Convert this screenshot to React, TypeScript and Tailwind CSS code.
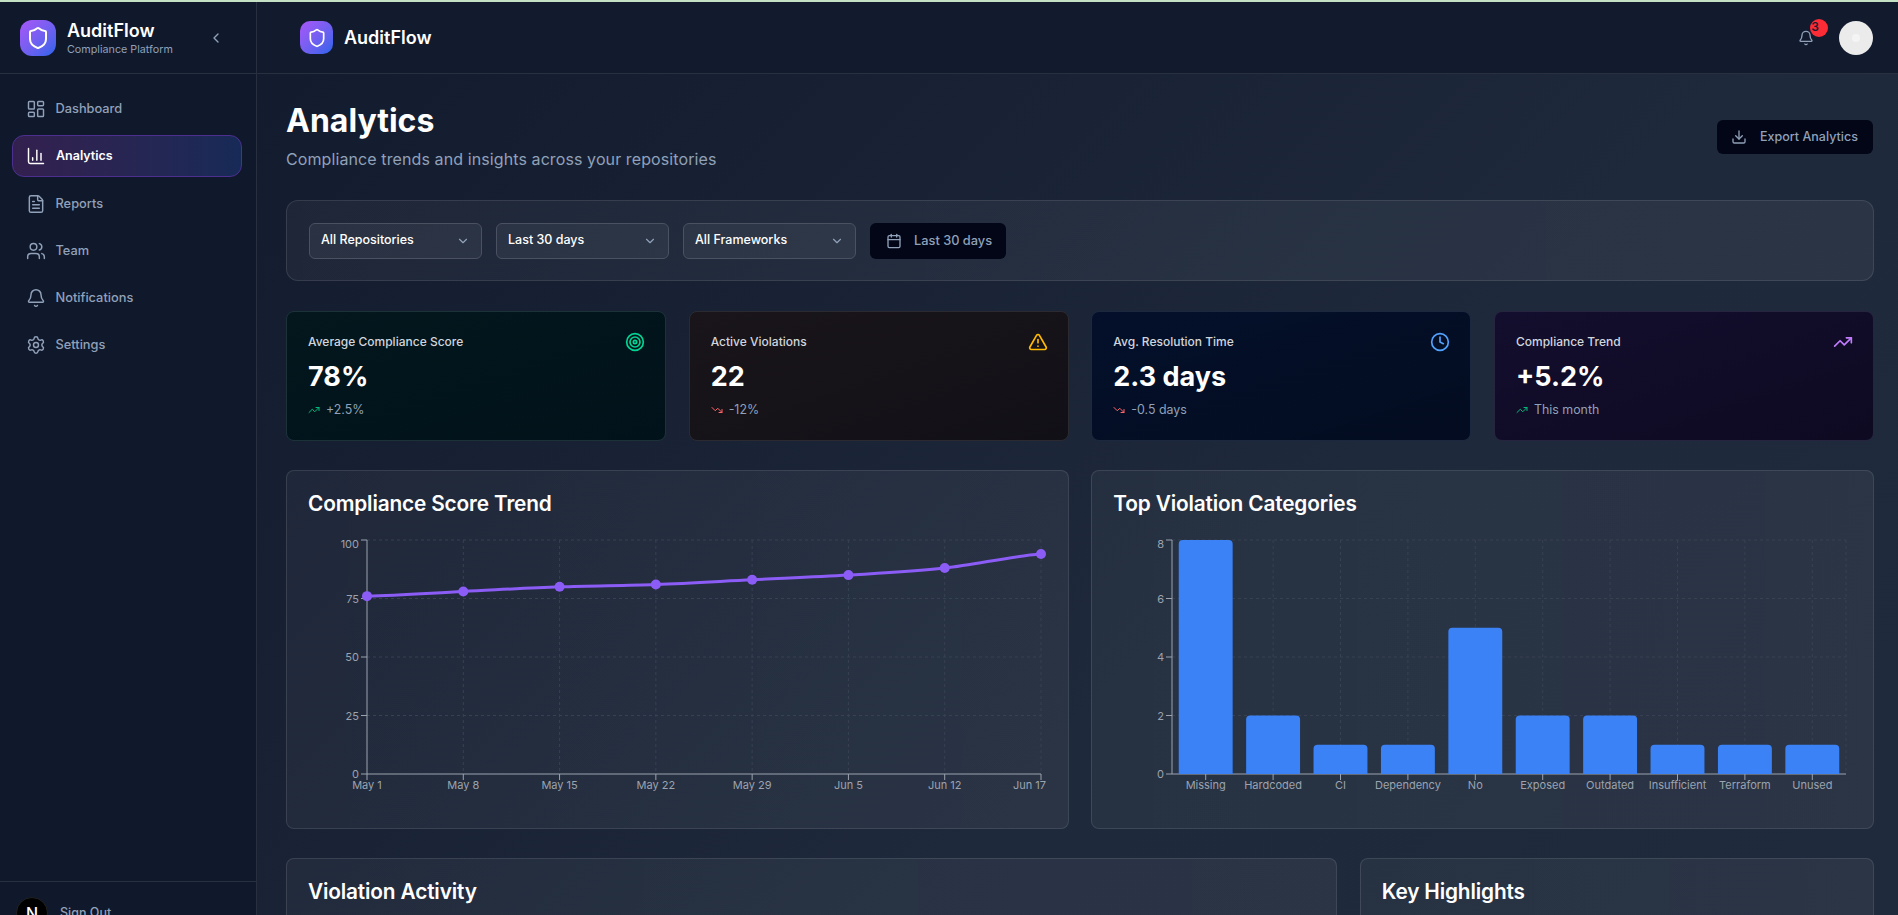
import {
  Bell,
  Calendar,
  ChartColumn,
  ChevronDown,
  ChevronLeft,
  Clock,
  Download,
  FileText,
  LayoutDashboard,
  Settings,
  Shield,
  Target,
  TrendingDown,
  TrendingUp,
  TriangleAlert,
  Users,
} from "lucide-react";

const NAV = [
  { label: "Dashboard", icon: LayoutDashboard },
  { label: "Analytics", icon: ChartColumn, active: true },
  { label: "Reports", icon: FileText },
  { label: "Team", icon: Users },
  { label: "Notifications", icon: Bell },
  { label: "Settings", icon: Settings },
];

const STATS = [
  {
    label: "Average Compliance Score",
    value: "78%",
    delta: "+2.5%",
    up: true,
    icon: Target,
    iconClass: "text-emerald-400",
    cardClass: "from-[#03171d] to-[#02121a] border-[#1c3239]",
  },
  {
    label: "Active Violations",
    value: "22",
    delta: "-12%",
    up: false,
    icon: TriangleAlert,
    iconClass: "text-amber-400",
    cardClass: "from-[#19151a] to-[#121017] border-[#2b2a30]",
  },
  {
    label: "Avg. Resolution Time",
    value: "2.3 days",
    delta: "-0.5 days",
    up: false,
    icon: Clock,
    iconClass: "text-blue-400",
    cardClass: "from-[#04102b] to-[#030c20] border-[#1c2840]",
  },
  {
    label: "Compliance Trend",
    value: "+5.2%",
    delta: "This month",
    up: true,
    icon: TrendingUp,
    iconClass: "text-purple-400",
    cardClass: "from-[#130e2d] to-[#0e0a22] border-[#272440]",
  },
];

const SCORE = [76, 78, 80, 81, 83, 85, 88, 94];
const SCORE_LABELS = ["May 1", "May 8", "May 15", "May 22", "May 29", "Jun 5", "Jun 12", "Jun 17"];
const CATEGORIES: [string, number][] = [
  ["Missing", 8],
  ["Hardcoded", 2],
  ["CI", 1],
  ["Dependency", 1],
  ["No", 5],
  ["Exposed", 2],
  ["Outdated", 2],
  ["Insufficient", 1],
  ["Terraform", 1],
  ["Unused", 1],
];

export default function App() {
  return (
    <div className="flex h-screen flex-col overflow-hidden bg-[#0f172a] font-['Inter',sans-serif] text-white">
      <div className="h-[2px] shrink-0 bg-[#c5e1c5]" />
      <div className="flex min-h-0 flex-1">
        <Sidebar />
        <div className="flex min-w-0 flex-1 flex-col">
          <TopBar />
          <main className="min-h-0 flex-1 overflow-hidden bg-[linear-gradient(135deg,#131b2e_0%,#1e293b_60%,#1f2a3c_100%)] pl-[29px] pr-6 pt-[27px]">
            <div className="flex items-start justify-between">
              <div>
                <h1 className="text-[32px] font-bold leading-10">Analytics</h1>
                <p className="mt-[6px] text-base tracking-[0.1px] text-slate-400">
                  Compliance trends and insights across your repositories
                </p>
              </div>
              <button className="mr-px mt-[19px] flex h-[34px] w-[156px] items-center gap-[13px] rounded-md bg-[#020617] pl-[14px] text-[12.5px] font-medium text-slate-400">
                <Download className="h-4 w-4" />
                Export Analytics
              </button>
            </div>

            <Filters />

            <div className="mt-[30px] grid grid-cols-4 gap-[22.67px]">
              {STATS.map((s) => (
                <StatCard key={s.label} {...s} />
              ))}
            </div>

            <div className="mt-[29px] grid grid-cols-2 gap-[22.67px]">
              <Panel title="Compliance Score Trend" className="h-[359px]">
                <TrendChart />
              </Panel>
              <Panel title="Top Violation Categories" className="h-[359px]">
                <BarChart />
              </Panel>
            </div>

            <div className="mt-[29px] grid grid-cols-3 gap-[22.67px]">
              <Panel title="Violation Activity" className="col-span-2 h-[300px]" />
              <Panel title="Key Highlights" className="h-[300px]" />
            </div>
          </main>
        </div>
      </div>
    </div>
  );
}

function Sidebar() {
  return (
    <aside className="flex h-full w-[257px] shrink-0 flex-col border-r border-[#283040] bg-[#10182b]">
      <div className="flex h-[72px] shrink-0 items-center border-b border-[#283040] pl-5 pr-8">
        <Logo className="h-9 w-9 rounded-xl" iconClass="h-6 w-6" />
        <div className="ml-[11px] flex-1 pt-[3px]">
          <div className="text-[18px] font-semibold leading-5">AuditFlow</div>
          <div className="mt-px text-[10.75px] leading-4 text-slate-400">Compliance Platform</div>
        </div>
        <ChevronLeft className="h-4 w-4 text-slate-400" />
      </div>
      <nav className="flex flex-1 flex-col gap-[6px] pl-3 pr-[14px] pt-[14px]">
        {NAV.map(({ label, icon: Icon, active }) => (
          <div
            key={label}
            className={
              active
                ? "flex h-[42px] items-center gap-[10px] rounded-xl border border-[#4c2f8f] bg-gradient-to-r from-[#33204f] to-[#172a57] pl-[13px] text-[12.5px] font-semibold text-white"
                : "flex h-[41px] items-center gap-[9.5px] pl-[14px] text-[12.8px] font-medium text-slate-400"
            }
          >
            <Icon className="h-5 w-5" strokeWidth={1.75} />
            {label}
          </div>
        ))}
      </nav>
      <div className="flex h-[34px] shrink-0 items-start gap-3 border-t border-[#283040] pl-4 pt-[15px]">
        <div className="flex h-8 w-8 shrink-0 items-center justify-center rounded-full border border-[#222] bg-black text-base font-medium">N</div>
        <span className="mt-[7px] text-[12.5px] font-medium text-slate-400">Sign Out</span>
      </div>
    </aside>
  );
}

function TopBar() {
  return (
    <header className="flex h-[72px] shrink-0 items-center border-b border-[#283040] bg-[#121a2e] pl-[43px] pr-[25px]">
      <Logo className="h-[33px] w-[33px] rounded-[10px]" iconClass="h-5 w-5" />
      <span className="ml-[11px] text-[18px] font-semibold">AuditFlow</span>
      <div className="ml-auto flex items-center">
        <div className="relative mr-[17px] flex h-8 w-8 items-center justify-center text-slate-400">
          <Bell className="h-4 w-4" />
          <span className="absolute -right-[6px] -top-[3px] flex h-[18px] w-[18px] items-center justify-center rounded-full bg-red-500 pb-0.5 pr-2 text-[12px] font-semibold text-[#1a1a2e]">
            3
          </span>
        </div>
        <div className="flex h-[34px] w-[34px] items-center justify-center rounded-full bg-[#ebebeb]">
          <div className="h-2 w-2 rounded-full bg-[#f4f4f4]" />
        </div>
      </div>
    </header>
  );
}

function Logo({ className, iconClass }: { className: string; iconClass: string }) {
  return (
    <div className={`flex shrink-0 items-center justify-center bg-gradient-to-br from-[#a855f7] to-[#2563eb] ${className}`}>
      <Shield className={iconClass} />
    </div>
  );
}

function Filters() {
  return (
    <div className="mt-[29px] flex h-[81px] items-center gap-[14.5px] rounded-xl border border-white/[0.1] bg-gradient-to-r from-white/[0.045] to-white/[0.055] px-[22px]">
      {["All Repositories", "Last 30 days", "All Frameworks"].map((f) => (
        <div
          key={f}
          className="flex h-9 w-[172.5px] items-center justify-between rounded-md border border-[#4a5160] bg-white/[0.05] px-[11px] text-[12.5px] font-medium"
        >
          {f}
          <ChevronDown className="h-[14px] w-[14px] text-slate-400" />
        </div>
      ))}
      <div className="flex h-9 w-[136px] items-center gap-3 rounded-md bg-[#020617] pl-4 text-[12.8px] font-medium text-slate-400">
        <Calendar className="h-4 w-4" />
        Last 30 days
      </div>
    </div>
  );
}

function StatCard({
  label,
  value,
  delta,
  up,
  icon: Icon,
  iconClass,
  cardClass,
}: (typeof STATS)[number]) {
  const Trend = up ? TrendingUp : TrendingDown;
  return (
    <div className={`h-[130px] rounded-lg border bg-gradient-to-br pl-[21px] pr-5 pt-5 ${cardClass}`}>
      <div className="flex h-5 items-center justify-between">
        <span className="text-[12px] font-medium text-gray-300">{label}</span>
        <Icon className={`h-5 w-5 ${iconClass}`} />
      </div>
      <div className="mt-[7px] text-[27px] font-bold leading-9">{value}</div>
      <div className="mt-[6px] flex items-center gap-[6px] text-[12.4px] text-slate-400">
        <Trend className={`h-3 w-3 ${up ? "text-emerald-500" : "text-red-400"}`} />
        {delta}
      </div>
    </div>
  );
}

function Panel({
  title,
  className,
  children,
}: {
  title: string;
  className: string;
  children?: React.ReactNode;
}) {
  return (
    <section className={`rounded-lg border border-white/[0.1] bg-gradient-to-r from-white/[0.04] to-white/[0.055] px-[21px] pt-[21px] ${className}`}>
      <h2 className="text-[20.8px] font-semibold leading-6 tracking-[-0.15px]">{title}</h2>
      {children}
    </section>
  );
}

// shared plot frame, sizes measured from the screenshot
const PLOT_TOP = 10;
const PLOT_H = 234;
const AXIS_X = 59;
const PLOT_W = 674;

function Axes({ yTicks, yMax }: { yTicks: number[]; yMax: number }) {
  const bottom = PLOT_TOP + PLOT_H;
  return (
    <>
      {yTicks.map((t) => {
        const y = bottom - (t / yMax) * PLOT_H;
        return (
          <g key={t}>
            {t > 0 && <line x1={AXIS_X} x2={AXIS_X + PLOT_W} y1={y} y2={y} stroke="#374151" strokeDasharray="3 3" />}
            <line x1={AXIS_X - 6} x2={AXIS_X} y1={y} y2={y} stroke="#9ca3af" />
            <text x={AXIS_X - 8} y={y + (t === yMax ? 8 : 4)} textAnchor="end" fontSize="11" fill="#9ca3af">
              {t}
            </text>
          </g>
        );
      })}
      <line x1={AXIS_X} x2={AXIS_X} y1={PLOT_TOP} y2={bottom} stroke="#9ca3af" />
      <line x1={AXIS_X} x2={AXIS_X + PLOT_W} y1={bottom} y2={bottom} stroke="#9ca3af" />
    </>
  );
}

function XTick({ x, label, grid, last }: { x: number; label: string; grid: boolean; last?: boolean }) {
  const bottom = PLOT_TOP + PLOT_H;
  return (
    <g>
      {grid && <line x1={x} x2={x} y1={PLOT_TOP} y2={bottom} stroke="#374151" strokeDasharray="3 3" />}
      <line x1={x} x2={x} y1={bottom} y2={bottom + 6} stroke="#9ca3af" />
      <text x={last ? x + 5 : x} y={bottom + 15} textAnchor={last ? "end" : "middle"} fontSize="11" fill="#9ca3af">
        {label}
      </text>
    </g>
  );
}

function TrendChart() {
  const step = PLOT_W / (SCORE.length - 1);
  const pts = SCORE.map((v, i) => [AXIS_X + i * step, PLOT_TOP + PLOT_H - (v / 100) * PLOT_H]);
  // gentle curve through the points, same look as a monotone line
  let d = `M${pts[0][0]},${pts[0][1]}`;
  for (let i = 1; i < pts.length; i++) {
    const [x0, y0] = pts[i - 1];
    const [x1, y1] = pts[i];
    const prev = pts[i - 2] ?? pts[i - 1];
    const next = pts[i + 1] ?? pts[i];
    const c1 = y0 + (y1 - prev[1]) / 6;
    const c2 = y1 - (next[1] - y0) / 6;
    d += ` C${x0 + step / 3},${c1} ${x1 - step / 3},${c2} ${x1},${y1}`;
  }
  return (
    <svg width="760" height="280" className="mt-[14px] block">
      <Axes yTicks={[0, 25, 50, 75, 100]} yMax={100} />
      {SCORE_LABELS.map((l, i) => (
        <XTick key={l} x={AXIS_X + i * step} label={l} grid={i > 0} last={i === SCORE_LABELS.length - 1} />
      ))}
      <path d={d} fill="none" stroke="#8b5cf6" strokeWidth="3" />
      {pts.map(([x, y]) => (
        <circle key={x} cx={x} cy={y} r="5" fill="#8b5cf6" />
      ))}
    </svg>
  );
}

function BarChart() {
  const step = PLOT_W / CATEGORIES.length;
  const bottom = PLOT_TOP + PLOT_H;
  return (
    <svg width="760" height="280" className="mt-[14px] block">
      <Axes yTicks={[0, 2, 4, 6, 8]} yMax={8} />
      <line x1={AXIS_X + PLOT_W} x2={AXIS_X + PLOT_W} y1={PLOT_TOP} y2={bottom} stroke="#374151" strokeDasharray="3 3" />
      {CATEGORIES.map(([l], i) => (
        <XTick key={l} x={AXIS_X + step * (i + 0.5)} label={l} grid />
      ))}
      {CATEGORIES.map(([l, v], i) => {
        const h = (v / 8) * PLOT_H;
        const x = AXIS_X + step * i + step * 0.1;
        const w = step * 0.8;
        return (
          <path
            key={l}
            d={`M${x},${bottom} V${bottom - h + 4} Q${x},${bottom - h} ${x + 4},${bottom - h} H${x + w - 4} Q${x + w},${bottom - h} ${x + w},${bottom - h + 4} V${bottom} Z`}
            fill="#3b82f6"
          />
        );
      })}
    </svg>
  );
}
